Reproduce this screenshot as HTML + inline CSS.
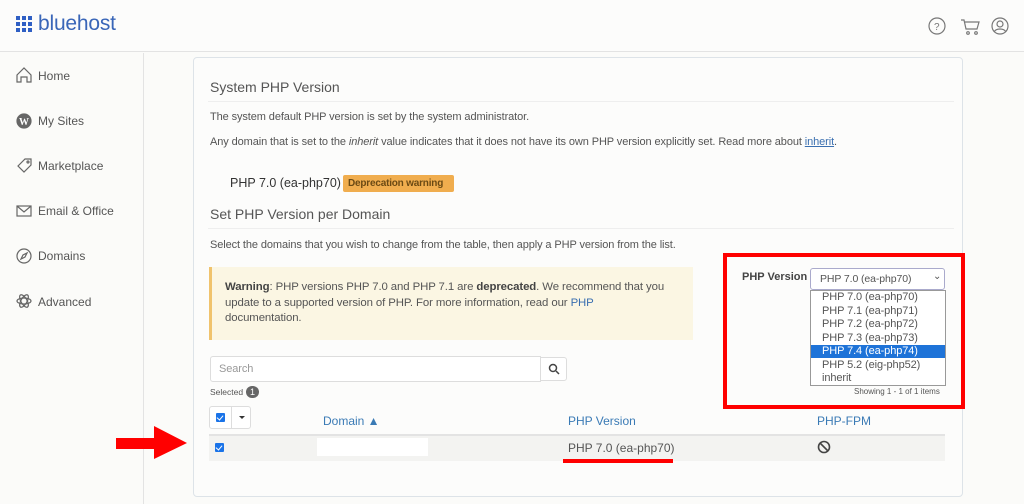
<!DOCTYPE html>
<html><head><meta charset="utf-8"><style>
*{margin:0;padding:0;box-sizing:border-box}
body{width:1024px;height:504px;overflow:hidden;background:#fbfbf9;font-family:"Liberation Sans",sans-serif;color:#555;position:relative}
.a{position:absolute;white-space:nowrap}
.t{font-size:11px;letter-spacing:-0.1px;color:#555}
.nav{font-size:12px;color:#555}
.cb{position:absolute;width:9px;height:9px;background:#1a73e8;border-radius:1px}
.cb:after{content:"";position:absolute;left:2px;top:1px;width:3px;height:5px;border:solid #fff;border-width:0 1.3px 1.3px 0;transform:rotate(40deg)}
</style></head><body>
<div class="a" style="left:0;top:0;width:1024px;height:52px;border-bottom:1px solid #e3e3e3;background:#fcfcfb"></div>
<svg class="a" style="left:16px;top:16px" width="16" height="16"><g fill="#2f5fc4">
<rect x="0" y="0" width="4" height="4"/><rect x="6" y="0" width="4" height="4"/><rect x="12" y="0" width="4" height="4"/>
<rect x="0" y="6" width="4" height="4"/><rect x="6" y="6" width="4" height="4"/><rect x="12" y="6" width="4" height="4"/>
<rect x="0" y="12" width="4" height="4"/><rect x="6" y="12" width="4" height="4"/><rect x="12" y="12" width="4" height="4"/></g></svg>
<div class="a" style="left:38px;top:12px;font-size:21px;color:#3a66b8;letter-spacing:-0.2px">bluehost</div>
<svg class="a" style="left:928px;top:17px" width="90" height="20" fill="none" stroke="#777" stroke-width="1.2">
<circle cx="9" cy="9" r="8"/><text x="6" y="13" font-size="10" fill="#777" stroke="none" font-family="Liberation Sans">?</text>
<path d="M33 3h3l2 9h11l2-7H37"/><circle cx="40" cy="16" r="1.3"/><circle cx="48" cy="16" r="1.3"/>
<circle cx="72" cy="9" r="8"/><circle cx="72" cy="7" r="3"/><path d="M66 15c2-4 10-4 12 0"/>
</svg>
<div class="a" style="left:143px;top:53px;width:1px;height:451px;background:#e3e3e3"></div>
<svg class="a" style="left:16px;top:66px" width="18" height="250" fill="none" stroke="#666" stroke-width="1.2">
<path d="M1 9L8 2l7 7v7h-4v-5H5v5H1z"/>
<circle cx="8" cy="55" r="7" fill="#666"/><text x="3" y="59" font-size="10" fill="#fff" stroke="none" font-weight="bold" font-family="Liberation Serif">W</text>
<path d="M2 100l7-7h6v6l-7 7z"/><circle cx="12" cy="96" r="1"/>
<rect x="1" y="140" width="14" height="10"/><path d="M1 140l7 6 7-6"/>
<circle cx="8" cy="190" r="7"/><path d="M11 187l-2 4-4 2 2-4z"/>
<ellipse cx="8" cy="235" rx="7" ry="3"/><ellipse cx="8" cy="235" rx="7" ry="3" transform="rotate(60 8 235)"/><ellipse cx="8" cy="235" rx="7" ry="3" transform="rotate(-60 8 235)"/>
</svg>
<div class="a nav" style="left:38px;top:69px">Home</div>
<div class="a nav" style="left:38px;top:114px">My Sites</div>
<div class="a nav" style="left:38px;top:159px">Marketplace</div>
<div class="a nav" style="left:38px;top:204px">Email &amp; Office</div>
<div class="a nav" style="left:38px;top:249px">Domains</div>
<div class="a nav" style="left:38px;top:295px">Advanced</div>
<div class="a" style="left:193px;top:57px;width:770px;height:440px;border:1px solid #dde3e8;border-radius:4px;background:#fcfcfb"></div>
<div class="a" style="left:210px;top:79px;font-size:14px;color:#555">System PHP Version</div>
<div class="a" style="left:208px;top:101px;width:746px;height:1px;background:#eee"></div>
<div class="a t" style="left:210px;top:111px">The system default PHP version is set by the system administrator.</div>
<div class="a t" style="left:210px;top:136px">Any domain that is set to the <i>inherit</i> value indicates that it does not have its own PHP version explicitly set. Read more about <span style="color:#3a6fb0;text-decoration:underline">inherit</span>.</div>
<div class="a" style="left:230px;top:176px;font-size:12.5px;color:#333">PHP 7.0 (ea-php70)</div>
<div class="a" style="left:343px;top:175px;width:111px;height:17px;background:#f0ad4e;border-radius:2px;font-size:10px;font-weight:bold;color:#6b4a14;padding:3px 5px;letter-spacing:-0.2px">Deprecation warning</div>
<div class="a" style="left:210px;top:206px;font-size:14px;color:#555">Set PHP Version per Domain</div>
<div class="a" style="left:208px;top:228px;width:746px;height:1px;background:#eee"></div>
<div class="a t" style="left:210px;top:239px">Select the domains that you wish to change from the table, then apply a PHP version from the list.</div>
<div class="a" style="left:209px;top:267px;width:484px;height:73px;background:#fbf6e3;border-left:3px solid #f0c36d"></div>
<div class="a t" style="left:225px;top:280px;line-height:15.5px;white-space:normal;width:445px;font-size:11.4px">
<b style="color:#444">Warning</b>: PHP versions PHP 7.0 and PHP 7.1 are <b style="color:#444">deprecated</b>. We recommend that you update to a supported version of PHP. For more information, read our <span style="color:#3a6fb0">PHP</span> documentation.</div>
<div class="a" style="left:210px;top:356px;width:331px;height:26px;border:1px solid #ddd;border-radius:3px 0 0 3px;background:#fff"></div>
<div class="a t" style="left:219px;top:363px;color:#999">Search</div>
<div class="a" style="left:540px;top:357px;width:27px;height:24px;border:1px solid #ddd;border-radius:0 3px 3px 0;background:#fff"></div>
<svg class="a" style="left:548px;top:363px" width="12" height="12" fill="none" stroke="#444" stroke-width="1.5"><circle cx="5" cy="5" r="3.5"/><path d="M8 8l3 3"/></svg>
<div class="a" style="left:210px;top:387px;font-size:8.5px;color:#555">Selected</div>
<div class="a" style="left:246px;top:386px;width:13px;height:12px;border-radius:6px;background:#666;color:#fff;font-size:9px;text-align:center;line-height:12px">1</div>
<div class="a" style="left:209px;top:406px;width:42px;height:23px;border:1px solid #ddd;border-radius:3px;background:#fff"></div>
<div class="a" style="left:231px;top:406px;width:1px;height:23px;background:#ddd"></div>
<div class="cb" style="left:216px;top:413px"></div>
<div class="a" style="left:239px;top:416px;border-left:3px solid transparent;border-right:3px solid transparent;border-top:3px solid #333"></div>
<div class="a" style="left:323px;top:414px;font-size:12px;color:#3a7ab5">Domain ▲</div>
<div class="a" style="left:568px;top:414px;font-size:12px;color:#3a7ab5">PHP Version</div>
<div class="a" style="left:817px;top:414px;font-size:12px;color:#3a7ab5">PHP-FPM</div>
<div class="a" style="left:209px;top:434px;width:736px;height:27px;background:#f3f3f1;border-top:2px solid #e3e3e3"></div>
<div class="cb" style="left:215px;top:443px"></div>
<div class="a" style="left:317px;top:438px;width:111px;height:18px;background:#fff"></div>
<div class="a" style="left:568px;top:441px;font-size:12px;color:#555">PHP 7.0 (ea-php70)</div>
<div class="a" style="left:563px;top:459px;width:110px;height:4px;background:#f00"></div>
<svg class="a" style="left:817px;top:440px" width="14" height="14" fill="none" stroke="#444" stroke-width="1.6"><circle cx="7" cy="7" r="5.5"/><path d="M3 3l8 8"/></svg>
<svg class="a" style="left:110px;top:420px" width="85" height="45"><path d="M6 18h38V6l33 17-33 16V29H6z" fill="#f00"/></svg>
<div class="a" style="left:723px;top:253px;width:242px;height:156px;border:4px solid #f00"></div>
<div class="a" style="left:742px;top:271px;font-size:11px;font-weight:bold;color:#444">PHP Version</div>
<div class="a" style="left:810px;top:268px;width:135px;height:22px;border:1px solid #aac;border-radius:3px;background:#fff"></div>
<div class="a t" style="left:820px;top:273px;font-size:10.5px">PHP 7.0 (ea-php70)</div>
<div class="a" style="left:933px;top:271px;font-size:10px;color:#555">⌄</div>
<div class="a" style="left:810px;top:290px;width:136px;height:96px;border:1px solid #999;background:#fff"></div>
<div class="a" style="left:811px;top:345px;width:134px;height:13px;background:#1e73d8"></div>
<div class="a t" style="left:822px;top:291px;font-size:11px;line-height:13.5px;white-space:pre">PHP 7.0 (ea-php70)
PHP 7.1 (ea-php71)
PHP 7.2 (ea-php72)
PHP 7.3 (ea-php73)
<span style="color:#fff">PHP 7.4 (ea-php74)</span>
PHP 5.2 (eig-php52)
inherit</div>
<div class="a" style="left:854px;top:387px;font-size:8px;color:#555">Showing 1 - 1 of 1 items</div>
</body></html>
